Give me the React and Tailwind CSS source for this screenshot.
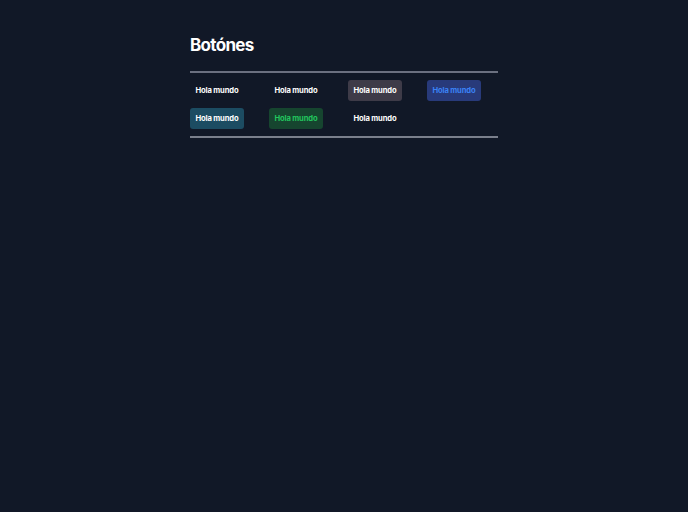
import React from "react";

const buttons = [
  { label: "Hola mundo", className: "bg-transparent text-white" },
  { label: "Hola mundo", className: "bg-transparent text-white" },
  { label: "Hola mundo", className: "bg-[#3e3b48] text-white" },
  { label: "Hola mundo", className: "bg-[#283a7a] text-[#3b82f6]" },
  { label: "Hola mundo", className: "bg-[#1c4c62] text-white" },
  { label: "Hola mundo", className: "bg-[#16452f] text-[#22c55e]" },
  { label: "Hola mundo", className: "bg-transparent text-white" },
];

export default function App() {
  return (
    <div
      className="min-h-[512px] w-full bg-[#111827] pt-[35px]"
      style={{ fontFamily: "Inter, 'Liberation Sans', sans-serif" }}
    >
      <div className="mx-auto w-[308px]">
        <h1 className="text-[17px] font-bold leading-[20px] tracking-[-0.04em] text-white">Botónes</h1>
        <hr className="mt-[16px] border-t-2 border-[#6b7080]" />
        {/* Button grid */}
        <div className="grid grid-cols-4 gap-x-2 gap-y-[7px] pt-[7px] pb-[7px]">
          {buttons.map((b, i) => (
            <div key={i} className="flex">
              <button
                className={`rounded-[3px] px-[5.5px] py-[5px] text-[7.6px] font-bold leading-[11px] tracking-[-0.02em] ${b.className}`}
              >
                {b.label}
              </button>
            </div>
          ))}
        </div>
        <hr className="border-t-2 border-[#7a7f8c]" />
      </div>
    </div>
  );
}
